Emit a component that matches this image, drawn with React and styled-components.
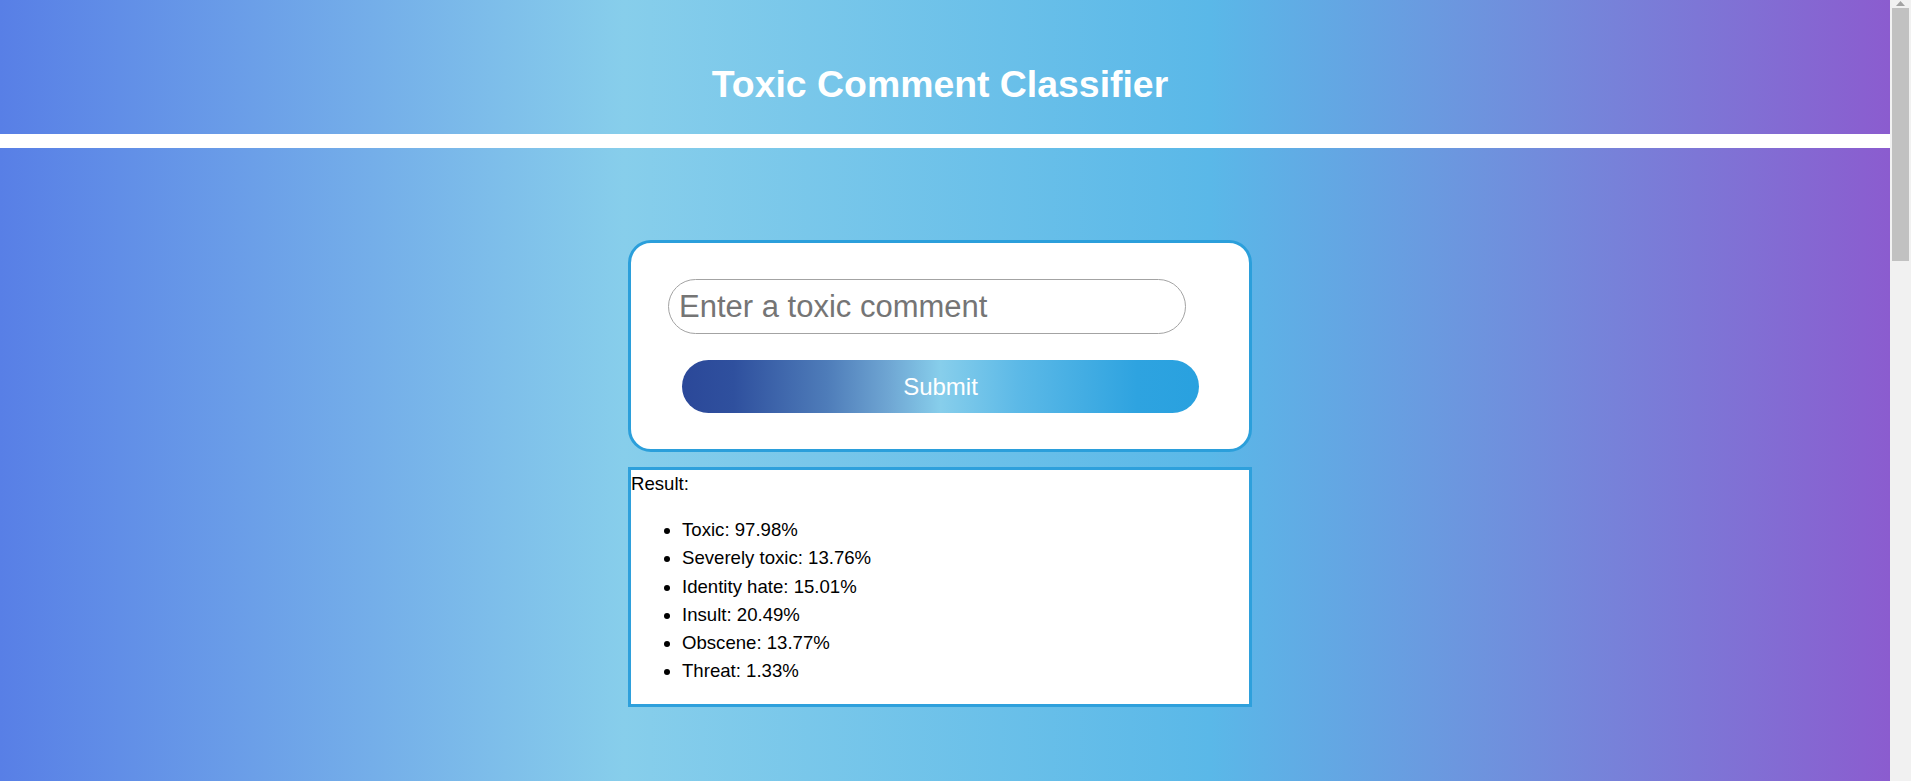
import React from 'react';
import styled, { createGlobalStyle } from 'styled-components';

const bg = `linear-gradient(to right, #587fe6 0%, #87ceeb 33%, #5ab8e8 64%, #8b5ccf 100%)`;

const GlobalStyle = createGlobalStyle`
  html, body {
    margin: 0;
    padding: 0;
    background: #ffffff;
    font-family: "Liberation Sans", Arial, sans-serif;
  }
`;

const Page = styled.div`
  margin-right: 21px;
  min-height: 100vh;
  display: flex;
  flex-direction: column;
`;

const Header = styled.header`
  box-sizing: border-box;
  height: 134px;
  padding: 63px 10px 0 0;
  background: ${bg};
  margin-bottom: 14px;

  h1 {
    margin: 0;
    text-align: center;
    color: #ffffff;
    font-size: 37.4px;
    font-weight: bold;
    line-height: 42px;
  }
`;

const Main = styled.main`
  flex: 1;
  box-sizing: border-box;
  padding: 92px 10px 0 0;
  background: ${bg};
  display: flex;
  flex-direction: column;
  align-items: center;
  gap: 15px;
`;

const Card = styled.form`
  box-sizing: border-box;
  width: 624px;
  padding: 36px 0;
  background: #ffffff;
  border: 3px solid #2b9fdb;
  border-radius: 23px;
  display: flex;
  flex-direction: column;
  gap: 26px;
`;

const Input = styled.input`
  box-sizing: border-box;
  width: 518px;
  height: 55px;
  margin-left: 37px;
  padding: 0 10px;
  border: 1px solid #a3a3a3;
  border-radius: 28px;
  font-family: "Liberation Sans", Arial, sans-serif;
  font-size: 31px;
  color: #222;
  outline: none;

  &::placeholder {
    color: #757575;
  }
`;

const Button = styled.button`
  box-sizing: border-box;
  width: 517px;
  height: 53px;
  margin-left: 51px;
  border: none;
  border-radius: 27px;
  background: linear-gradient(
    to right,
    #2b4899 0%,
    #2f509e 10%,
    #4e7cb9 28%,
    #6fa6d3 40%,
    #87ceeb 50%,
    #5cb9e7 65%,
    #2ea3e0 88%,
    #29a1df 100%
  );
  color: #ffffff;
  font-family: "Liberation Sans", Arial, sans-serif;
  font-size: 24px;
  cursor: pointer;
`;

const Result = styled.section`
  box-sizing: border-box;
  width: 624px;
  background: #ffffff;
  border: 3px solid #2ea0dc;
  color: #000;
  font-size: 18.6px;

  p {
    margin: 0;
    padding-top: 3px;
    line-height: 21px;
  }

  ul {
    margin: 22px 0 18px;
    padding-left: 51px;
  }

  li {
    line-height: 28.3px;
  }
`;

/* the browser scrollbar seen on the right edge of the window */
const ScrollTrack = styled.div`
  position: fixed;
  top: 0;
  right: 0;
  width: 21px;
  height: 100vh;
  background: #f1f1f1;
  display: flex;
  flex-direction: column;
  align-items: center;

  svg {
    margin-top: 1px;
  }
`;

const ScrollThumb = styled.div`
  margin-top: 1px;
  width: 17px;
  height: 253px;
  background: #c1c1c1;
`;

const scores = [
  ['Toxic', '97.98%'],
  ['Severely toxic', '13.76%'],
  ['Identity hate', '15.01%'],
  ['Insult', '20.49%'],
  ['Obscene', '13.77%'],
  ['Threat', '1.33%'],
];

export default function App() {
  return (
    <>
      <GlobalStyle />
      <Page>
        <Header>
          <h1>Toxic Comment Classifier</h1>
        </Header>
        <Main>
          <Card onSubmit={e => e.preventDefault()}>
            <Input type='text' placeholder='Enter a toxic comment' />
            <Button type='submit'>Submit</Button>
          </Card>
          <Result>
            <p>Result:</p>
            <ul>
              {scores.map(([label, value]) => (
                <li key={label}>{label}: {value}</li>
              ))}
            </ul>
          </Result>
        </Main>
      </Page>
      <ScrollTrack>
        <svg width='9' height='6' viewBox='0 0 9 6'>
          <path d='M4.5 0 L9 5 L0 5 Z' fill='#a3a3a3' />
        </svg>
        <ScrollThumb />
      </ScrollTrack>
    </>
  );
}
